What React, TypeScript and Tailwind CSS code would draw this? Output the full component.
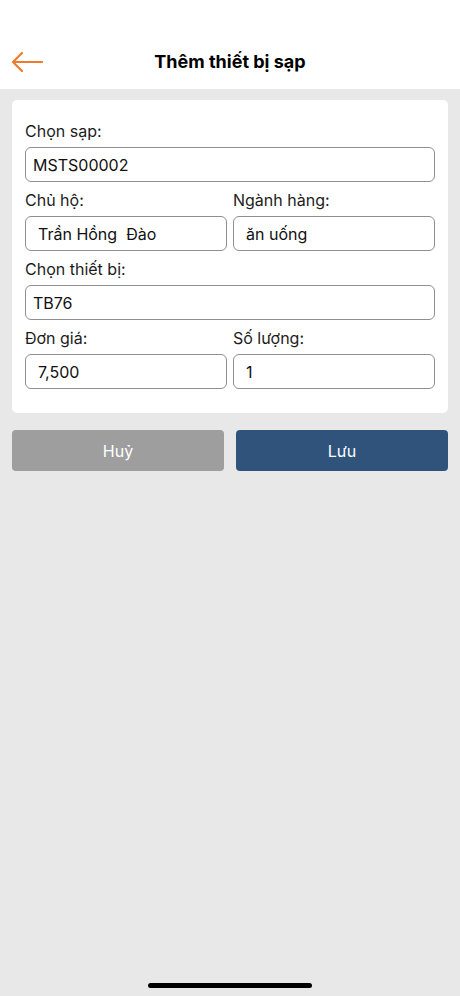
import React from 'react';

const font = { fontFamily: 'Inter, "Noto Sans", "Liberation Sans", sans-serif' };

function Field({ label, value, inset = false }: { label: string; value: string; inset?: boolean }) {
  return (
    <div className="flex flex-col gap-[6px] flex-1 min-w-0">
      <div className="h-[20px] leading-[20px] text-[16px] text-[#1c1c1c]">{label}</div>
      <div
        className={`h-[35px] rounded-[6px] border border-[#8f8f8f] bg-white flex items-center text-[16px] text-[#111] whitespace-pre ${
          inset ? 'pl-[12px]' : 'pl-[7px]'
        }`}
      >
        {value}
      </div>
    </div>
  );
}

export default function App() {
  return (
    <div className="w-[460px] h-[996px] flex flex-col bg-[#e8e8e8] overflow-hidden" style={font}>
      <div className="h-[89px] bg-white relative flex items-center justify-center pt-[35px] shrink-0">
        <button className="absolute left-[10px] top-[49px] w-[34px] h-[26px] flex items-center justify-center">
          <svg width="32" height="22" viewBox="0 0 32 22" fill="none">
            <path d="M31 11H2M11 2L2 11l9 9" stroke="#f07b2c" strokeWidth="2.2" strokeLinecap="round" strokeLinejoin="round" />
          </svg>
        </button>
        <h1 className="text-[18px] font-bold text-black leading-[22px]">Thêm thiết bị sạp</h1>
      </div>

      <div className="px-[12px] pt-[11px]">
        <div className="bg-white rounded-[5px] px-[13px] pt-[21px] pb-[24px] flex flex-col gap-[8px]">
          <Field label="Chọn sạp:" value="MSTS00002" />
          <div className="flex gap-[6px]">
            <Field label="Chủ hộ:" value="Trần Hồng  Đào" inset />
            <Field label="Ngành hàng:" value="ăn uống" inset />
          </div>
          <Field label="Chọn thiết bị:" value="TB76" />
          <div className="flex gap-[6px]">
            <Field label="Đơn giá:" value="7,500" inset />
            <Field label="Số lượng:" value="1" inset />
          </div>
        </div>

        <div className="flex gap-[12px] mt-[17px]">
          <button className="flex-1 h-[41px] rounded-[4px] bg-[#9e9e9e] text-white text-[16px]">Huỷ</button>
          <button className="flex-1 h-[41px] rounded-[4px] bg-[#30537c] text-white text-[16px]">Lưu</button>
        </div>
      </div>

      <div className="flex-1" />
      <div className="flex justify-center pb-[8px]">
        <div className="w-[164px] h-[5px] rounded-full bg-black" />
      </div>
    </div>
  );
}
